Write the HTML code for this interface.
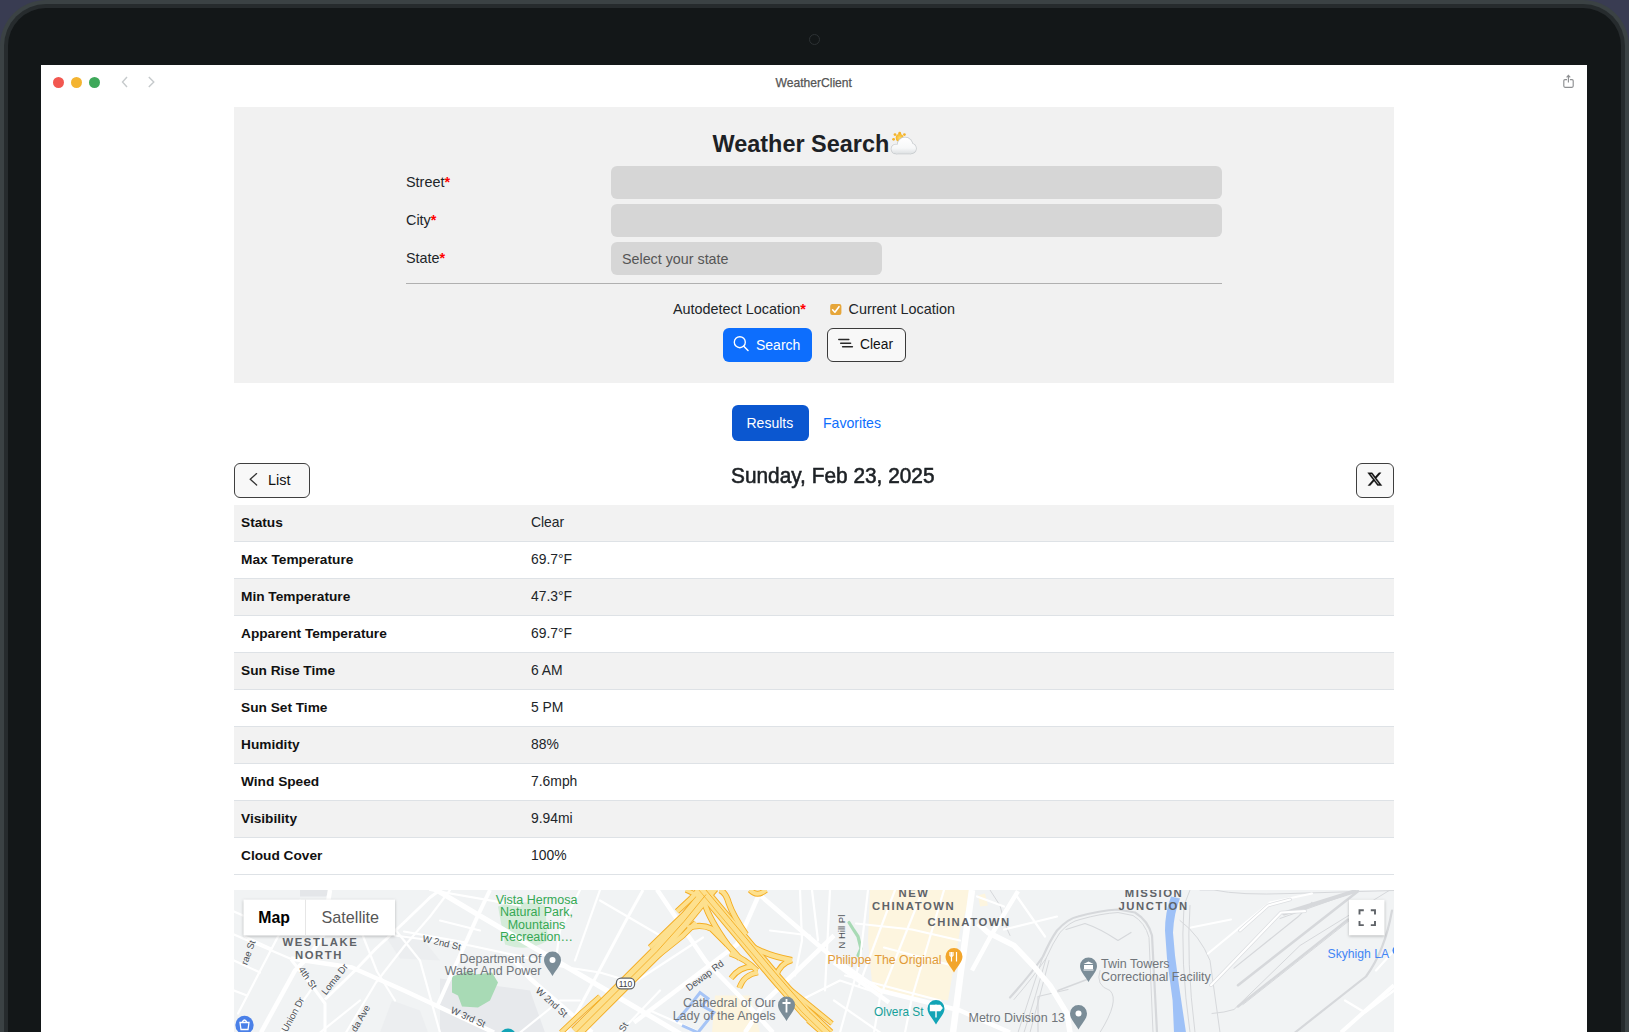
<!DOCTYPE html>
<html><head><meta charset="utf-8">
<style>
*{box-sizing:border-box;margin:0;padding:0}
html,body{width:1629px;height:1032px;overflow:hidden;background:#393c52;font-family:"Liberation Sans",sans-serif;color:#212529}
.abs{position:absolute}
.t{position:absolute;white-space:nowrap;line-height:normal}
#rim{position:absolute;left:0;top:0;width:1629px;height:1300px;border-radius:46px;background:#3b4244}
#ring{position:absolute;left:4px;top:4px;width:1621px;height:1292px;border-radius:42px;background:#262b2d}
#bezel{position:absolute;left:8px;top:8px;width:1613px;height:1284px;border-radius:38px;background:#131718}
#screen{position:absolute;left:41px;top:65px;width:1546px;height:1000px;background:#fff;overflow:hidden}
.dot{position:absolute;width:11.2px;height:11.2px;border-radius:50%;top:76.8px}
.req{color:#f00;font-weight:bold}
.lbl{font-size:14.4px;color:#212529}
.inp{position:absolute;background:#d6d6d6;border-radius:6px}
.btn{position:absolute;border-radius:6px}
.row{position:absolute;left:234px;width:1160px;height:37px;border-bottom:1px solid #dee2e6}
.row.s{background:#f2f2f2}
.k{position:absolute;left:7px;top:10.4px;font-weight:bold;font-size:13.7px;color:#111}
.v{position:absolute;left:297px;top:9.6px;font-size:13.9px;color:#212529}
</style></head><body>
<div id="rim"></div><div id="ring"></div><div id="bezel"></div>
<div class="abs" style="left:809px;top:34px;width:11px;height:11px;border-radius:50%;border:1.8px solid #2d3234"></div>
<div id="screen"></div>

<!-- toolbar -->
<div class="dot" style="left:52.5px;background:#f25750"></div>
<div class="dot" style="left:70.5px;background:#f4b431"></div>
<div class="dot" style="left:88.6px;background:#3ea85a"></div>
<svg class="abs" style="left:118px;top:74px" width="40" height="16" viewBox="0 0 40 16">
 <path d="M9 3 L4.5 8 L9 13" fill="none" stroke="#c6cacc" stroke-width="1.4"/>
 <path d="M30.8 3 L35.8 8 L30.8 13" fill="none" stroke="#c6cacc" stroke-width="1.4"/>
</svg>
<div class="t" style="left:775.5px;top:76.2px;font-size:12.1px;color:#555;-webkit-text-stroke:0.25px #555">WeatherClient</div>
<svg class="abs" style="left:1560px;top:73px" width="16" height="18" viewBox="0 0 16 18">
 <path d="M7 6.6 H5 Q3.8 6.6 3.8 7.8 V13.1 Q3.8 14.3 5 14.3 H12 Q13.2 14.3 13.2 13.1 V7.8 Q13.2 6.6 12 6.6 H9.9" fill="none" stroke="#8e9092" stroke-width="1.15"/>
 <path d="M8.4 9.6 V2.6 M6.6 4.3 L8.4 2.4 L10.2 4.3" fill="none" stroke="#8e9092" stroke-width="1.15"/>
</svg>

<!-- search panel -->
<div class="abs" style="left:234px;top:107px;width:1160px;height:276px;background:#f1f1f1"></div>
<div class="t" style="left:712.5px;top:131px;font-size:23.45px;font-weight:bold;color:#1d2125">Weather Search</div>

<div class="t lbl" style="left:406px;top:174.2px">Street<span class="req">*</span></div>
<div class="t lbl" style="left:406px;top:212.2px">City<span class="req">*</span></div>
<div class="t lbl" style="left:406px;top:250.2px">State<span class="req">*</span></div>
<div class="inp" style="left:610.5px;top:166px;width:611px;height:33px"></div>
<div class="inp" style="left:610.5px;top:204px;width:611px;height:33px"></div>
<div class="inp" style="left:610.5px;top:242px;width:271px;height:33px"></div>
<div class="t" style="left:622px;top:251px;font-size:14.3px;color:#555">Select your state</div>
<div class="abs" style="left:406px;top:283px;width:816px;height:1px;background:#b0b0b0"></div>

<div class="t lbl" style="left:673px;top:300.5px">Autodetect Location<span class="req">*</span></div>
<div class="t lbl" style="left:848.5px;top:300.5px">Current Location</div>

<div class="btn" style="left:723px;top:327.5px;width:89px;height:34px;background:#0d6efd"></div>
<div class="t" style="left:756px;top:336.5px;font-size:14px;color:#fff">Search</div>
<div class="btn" style="left:826.5px;top:327.5px;width:79px;height:34px;background:#f8f8f8;border:1.5px solid #3a3a3a"></div>
<div class="t" style="left:860px;top:336.5px;font-size:13.8px;color:#111">Clear</div>

<!-- tabs -->
<div class="btn" style="left:732px;top:405px;width:76.5px;height:36px;background:#0b57d0"></div>
<div class="t" style="left:746.5px;top:414.6px;font-size:14px;color:#fff">Results</div>
<div class="t" style="left:823px;top:414.6px;font-size:14.1px;color:#0d6efd">Favorites</div>

<div class="t" style="left:730.5px;top:462.6px;font-size:22.5px;color:#1d2125;transform:scaleX(0.926);transform-origin:0 0;-webkit-text-stroke:0.6px #1d2125">Sunday, Feb 23, 2025</div>
<div class="btn" style="left:234px;top:463px;width:76px;height:34.5px;background:#f8f8f8;border:1.5px solid #3f3f3f"></div>
<div class="t" style="left:268px;top:471.5px;font-size:14.5px;color:#111">List</div>
<div class="btn" style="left:1356px;top:463px;width:38px;height:34.5px;background:#f8f8f8;border:1.5px solid #3f3f3f"></div>


<!-- icons -->
<svg class="abs" style="left:888px;top:128px" width="32" height="30" viewBox="888 128 32 30">
 <defs><linearGradient id="cg" gradientUnits="userSpaceOnUse" x1="0" y1="137" x2="0" y2="154"><stop offset="0" stop-color="#ffffff"/><stop offset="0.65" stop-color="#f7f8f9"/><stop offset="1" stop-color="#dcdfe1"/></linearGradient>
 <radialGradient id="sg"><stop offset="0" stop-color="#ffd864"/><stop offset="1" stop-color="#f4b425"/></radialGradient></defs>
 <g fill="#f4b22a"><circle cx="895" cy="134.6" r="1.4"/><circle cx="899.7" cy="133.2" r="1.4"/><circle cx="904.4" cy="134.6" r="1.4"/><circle cx="893.6" cy="139.3" r="1.4"/></g>
 <circle cx="899.6" cy="137.8" r="3.9" fill="url(#sg)"/>
 <g fill="#c6cacd"><circle cx="905" cy="145" r="8.2"/><circle cx="911" cy="148.5" r="5.7"/><circle cx="896" cy="149" r="5.3"/><rect x="896" y="147" width="15" height="7.3"/></g>
 <g fill="url(#cg)"><circle cx="905" cy="145" r="7.5"/><circle cx="911" cy="148.5" r="5"/><circle cx="896" cy="149" r="4.6"/><rect x="896" y="147" width="15" height="6.6"/></g>
</svg>
<svg class="abs" style="left:828px;top:302px" width="16" height="15" viewBox="0 0 16 15">
 <rect x="2.2" y="2" width="11.2" height="11" rx="2" fill="#e6a63a"/>
 <path d="M4.6 7.8 L6.9 10.2 L11 4.7" fill="none" stroke="#fff" stroke-width="1.6" stroke-linecap="round" stroke-linejoin="round"/>
</svg>
<svg class="abs" style="left:730px;top:333px" width="22" height="22" viewBox="0 0 22 22">
 <circle cx="9.8" cy="9.2" r="5.5" fill="none" stroke="#fff" stroke-width="1.35"/>
 <path d="M13.8 13.2 L18 17.5" stroke="#fff" stroke-width="1.5" stroke-linecap="round"/>
</svg>
<svg class="abs" style="left:834px;top:334px" width="22" height="18" viewBox="0 0 22 18">
 <path d="M4.8 5.5 H14.8 M6.7 9.3 H16.6 M8.6 12.8 H18.4" stroke="#2a2a2a" stroke-width="1.5" stroke-linecap="round"/>
</svg>
<svg class="abs" style="left:244px;top:470px" width="18" height="18" viewBox="0 0 18 18">
 <path d="M12.6 3.6 L6.2 9.3 L12.6 15" fill="none" stroke="#333" stroke-width="1.35" stroke-linecap="round" stroke-linejoin="round"/>
</svg>
<svg class="abs" style="left:1367px;top:471px" width="16" height="16" viewBox="1.2 1.2 22 22">
 <g transform="translate(1.1 1.6) scale(0.9 0.9)"><path d="M18.244 2.25h3.308l-7.227 8.26 8.502 11.24H16.17l-5.214-6.817L4.99 21.75H1.68l7.73-8.835L1.254 2.25H8.08l4.713 6.231zm-1.161 17.52h1.833L7.084 4.126H5.117z" fill="#111" stroke="#111" stroke-width="0.6"/></g>
</svg>

<!-- table -->
<div id="table">
<div class="row s" style="top:504.6px"><span class="k">Status</span><span class="v">Clear</span></div>
<div class="row" style="top:541.6px"><span class="k">Max Temperature</span><span class="v">69.7°F</span></div>
<div class="row s" style="top:578.6px"><span class="k">Min Temperature</span><span class="v">47.3°F</span></div>
<div class="row" style="top:615.6px"><span class="k">Apparent Temperature</span><span class="v">69.7°F</span></div>
<div class="row s" style="top:652.6px"><span class="k">Sun Rise Time</span><span class="v">6 AM</span></div>
<div class="row" style="top:689.6px"><span class="k">Sun Set Time</span><span class="v">5 PM</span></div>
<div class="row s" style="top:726.6px"><span class="k">Humidity</span><span class="v">88%</span></div>
<div class="row" style="top:763.6px"><span class="k">Wind Speed</span><span class="v">7.6mph</span></div>
<div class="row s" style="top:800.6px"><span class="k">Visibility</span><span class="v">9.94mi</span></div>
<div class="row" style="top:837.6px"><span class="k">Cloud Cover</span><span class="v">100%</span></div>
</div>

<!-- map -->
<svg class="abs" style="left:234px;top:889.5px" width="1160" height="142.5" viewBox="234 889.5 1160 142.5">
<rect x="234" y="889.5" width="1160" height="143" fill="#f1f3f4"/>
<path d="M440 978 L530 990 L545 1032 L440 1032 Z" fill="#e7e9ec"/>
<path d="M300 889.5 L330 889.5 L326 896 L300 896 Z" fill="#e4e6e9"/>
<path d="M392 1000 L420 1010 L428 1032 L380 1032 Z" fill="#eceef0"/>
<path d="M385 935 L420 935 L440 960 L400 958 Z" fill="#eceef0"/>
<path d="M870 889.5 L972 889.5 L960 930 L948 1000 L873 992 L868 940 Z" fill="#fdf5df"/>
<path d="M715 995 L750 995 L760 1032 L712 1032 Z" fill="#fdf5df"/>
<path d="M978 895 L985 893 L988 905 L980 906 Z" fill="#fdf5df"/>
<path d="M498 906 Q520 898 545 905 L548 940 Q528 952 505 944 Z" fill="#d4ecd9"/>
<path d="M849 922 L854 930 L858 936 L861 948 L858 955" fill="none" stroke="#a8dab5" stroke-width="3.2" stroke-linecap="round"/>
<path d="M452 976 L470 970 L475 974 L492 972 L498 982 L490 1000 L478 1007 L462 1006 L458 995 L452 992 Z" fill="#a8dab5"/>
<path d="M1010 997 Q1030 975 1043 956 Q1050 940 1057 930 Q1068 918 1078 916 Q1100 910 1118 909 L1135 912 Q1148 920 1152 935 L1157 1032" fill="none" stroke="#d6d8db" stroke-width="2.2" stroke-linecap="round" stroke-linejoin="round"/>
<path d="M1014 999 Q1033 977 1046 958 Q1053 942 1060 932 Q1070 921 1080 919 Q1101 913 1118 912 L1133 915 Q1145 922 1149 937 L1153 1032" fill="none" stroke="#d6d8db" stroke-width="1" stroke-linecap="round" stroke-linejoin="round"/>
<path d="M1018 1032 Q1030 995 1043 956" fill="none" stroke="#d6d8db" stroke-width="1" stroke-linecap="round" stroke-linejoin="round"/>
<path d="M1024 1032 Q1036 995 1046 958" fill="none" stroke="#d6d8db" stroke-width="1" stroke-linecap="round" stroke-linejoin="round"/>
<path d="M1030 1032 Q1040 995 1049 960" fill="none" stroke="#d6d8db" stroke-width="1" stroke-linecap="round" stroke-linejoin="round"/>
<path d="M1238 984.7 L1358 890.7" fill="none" stroke="#d6d8db" stroke-width="2.6" stroke-linecap="round" stroke-linejoin="round"/>
<path d="M1234 967.6 L1298 916.3 L1312 902" fill="none" stroke="#d6d8db" stroke-width="1.2" stroke-linecap="round" stroke-linejoin="round"/>
<path d="M1238 1006 L1348 919" fill="none" stroke="#d6d8db" stroke-width="2.4" stroke-linecap="round" stroke-linejoin="round"/>
<path d="M1243 1004 L1352 918" fill="none" stroke="#d6d8db" stroke-width="1" stroke-linecap="round" stroke-linejoin="round"/>
<path d="M1295 1032 L1366 976 Q1385 950 1392 910" fill="none" stroke="#d6d8db" stroke-width="2.2" stroke-linecap="round" stroke-linejoin="round"/>
<path d="M1212 1013 Q1225 1012 1234 1009 L1300 945 L1390 889.5" fill="none" stroke="#d6d8db" stroke-width="1" stroke-linecap="round" stroke-linejoin="round"/>
<path d="M1284 913 L1355 890.7" fill="none" stroke="#d6d8db" stroke-width="4" stroke-linecap="round" stroke-linejoin="round"/>
<path d="M1280 918 L1350 893" fill="none" stroke="#d6d8db" stroke-width="1" stroke-linecap="round" stroke-linejoin="round"/>
<path d="M1190 1032 Q1180 960 1184 905 L1190 889.5" fill="none" stroke="#d6d8db" stroke-width="1" stroke-linecap="round" stroke-linejoin="round"/>
<path d="M1195 1032 Q1186 960 1190 905" fill="none" stroke="#d6d8db" stroke-width="1" stroke-linecap="round" stroke-linejoin="round"/>
<path d="M1200 889.5 L1214 889.5 Q1240 895 1290 893 L1394 890" fill="none" stroke="#d6d8db" stroke-width="1" stroke-linecap="round" stroke-linejoin="round"/>
<path d="M1066 929 L1085 923 Q1100 928 1118 940 L1131 932" fill="none" stroke="#d6d8db" stroke-width="1.2" stroke-linecap="round" stroke-linejoin="round"/>
<path d="M1038 1032 L1038 996 L1068 989" fill="none" stroke="#d6d8db" stroke-width="1.2" stroke-linecap="round" stroke-linejoin="round"/>
<path d="M1058 990 L1087 979" fill="none" stroke="#d6d8db" stroke-width="1.5" stroke-linecap="round" stroke-linejoin="round"/>
<path d="M1100 1032 Q1120 1000 1110 990 Q1095 985 1100 970" fill="none" stroke="#d6d8db" stroke-width="1" stroke-linecap="round" stroke-linejoin="round"/>
<path d="M990 889.5 L1000 905 Q1005 925 1010 935" fill="none" stroke="#d6d8db" stroke-width="1" stroke-linecap="round" stroke-linejoin="round"/>
<path d="M1180 920 Q1200 935 1210 960 L1220 1032" fill="none" stroke="#d6d8db" stroke-width="1" stroke-linecap="round" stroke-linejoin="round"/>
<path d="M234 960 L260 972" fill="none" stroke="#ffffff" stroke-width="2.2" stroke-linecap="round" stroke-linejoin="round"/>
<path d="M234 990 L247 995" fill="none" stroke="#ffffff" stroke-width="2.2" stroke-linecap="round" stroke-linejoin="round"/>
<path d="M245 936 L271 948" fill="none" stroke="#ffffff" stroke-width="2.2" stroke-linecap="round" stroke-linejoin="round"/>
<path d="M234 911 L243 915" fill="none" stroke="#ffffff" stroke-width="2.2" stroke-linecap="round" stroke-linejoin="round"/>
<path d="M238 1013 L278 936 L300 900" fill="none" stroke="#ffffff" stroke-width="2.2" stroke-linecap="round" stroke-linejoin="round"/>
<path d="M234 934 L290 958" fill="none" stroke="#ffffff" stroke-width="2.2" stroke-linecap="round" stroke-linejoin="round"/>
<path d="M346 1032 L376 982 L404 946 L430 916 L450 889.5" fill="none" stroke="#ffffff" stroke-width="2.2" stroke-linecap="round" stroke-linejoin="round"/>
<path d="M281 1032 L314 985" fill="none" stroke="#ffffff" stroke-width="2.2" stroke-linecap="round" stroke-linejoin="round"/>
<path d="M362 933 L377 971 L395 1000" fill="none" stroke="#ffffff" stroke-width="2.2" stroke-linecap="round" stroke-linejoin="round"/>
<path d="M396 930 L420 960 L440 1032" fill="none" stroke="#ffffff" stroke-width="2.2" stroke-linecap="round" stroke-linejoin="round"/>
<path d="M395 935 L470 945 L540 960" fill="none" stroke="#ffffff" stroke-width="2.2" stroke-linecap="round" stroke-linejoin="round"/>
<path d="M404 931 L466 942" fill="none" stroke="#ffffff" stroke-width="2.2" stroke-linecap="round" stroke-linejoin="round"/>
<path d="M430 889.5 L520 905" fill="none" stroke="#ffffff" stroke-width="2.2" stroke-linecap="round" stroke-linejoin="round"/>
<path d="M440 920 L480 930" fill="none" stroke="#ffffff" stroke-width="2.2" stroke-linecap="round" stroke-linejoin="round"/>
<path d="M360 1000 L320 1032" fill="none" stroke="#ffffff" stroke-width="2.2" stroke-linecap="round" stroke-linejoin="round"/>
<path d="M580 889.5 L560 930 L555 965" fill="none" stroke="#ffffff" stroke-width="2.2" stroke-linecap="round" stroke-linejoin="round"/>
<path d="M600 889.5 L575 960" fill="none" stroke="#ffffff" stroke-width="2.2" stroke-linecap="round" stroke-linejoin="round"/>
<path d="M555 965 L600 972 L634 982" fill="none" stroke="#ffffff" stroke-width="2.2" stroke-linecap="round" stroke-linejoin="round"/>
<path d="M634 982 L703 937" fill="none" stroke="#ffffff" stroke-width="2.2" stroke-linecap="round" stroke-linejoin="round"/>
<path d="M600 900 L660 935" fill="none" stroke="#ffffff" stroke-width="2.2" stroke-linecap="round" stroke-linejoin="round"/>
<path d="M620 1032 L660 990" fill="none" stroke="#ffffff" stroke-width="2.2" stroke-linecap="round" stroke-linejoin="round"/>
<path d="M650 1010 L700 1032" fill="none" stroke="#ffffff" stroke-width="2.2" stroke-linecap="round" stroke-linejoin="round"/>
<path d="M520 1032 L560 1000 L580 1000" fill="none" stroke="#ffffff" stroke-width="2.2" stroke-linecap="round" stroke-linejoin="round"/>
<path d="M800 889.5 L802 940 L795 975" fill="none" stroke="#ffffff" stroke-width="2.2" stroke-linecap="round" stroke-linejoin="round"/>
<path d="M812 889.5 L818 940" fill="none" stroke="#ffffff" stroke-width="2.2" stroke-linecap="round" stroke-linejoin="round"/>
<path d="M770 930 L810 935" fill="none" stroke="#ffffff" stroke-width="2.2" stroke-linecap="round" stroke-linejoin="round"/>
<path d="M830 889.5 L825 990" fill="none" stroke="#ffffff" stroke-width="2.2" stroke-linecap="round" stroke-linejoin="round"/>
<path d="M800 1000 L840 980 L870 990" fill="none" stroke="#ffffff" stroke-width="2.2" stroke-linecap="round" stroke-linejoin="round"/>
<path d="M868 889.5 L860 960 L840 1032" fill="none" stroke="#ffffff" stroke-width="2.2" stroke-linecap="round" stroke-linejoin="round"/>
<path d="M895 889.5 L859 985" fill="none" stroke="#ffffff" stroke-width="2.2" stroke-linecap="round" stroke-linejoin="round"/>
<path d="M923 889.5 L880 997 L874 1032" fill="none" stroke="#ffffff" stroke-width="2.2" stroke-linecap="round" stroke-linejoin="round"/>
<path d="M944 889.5 L912 997 L905 1032" fill="none" stroke="#ffffff" stroke-width="2.2" stroke-linecap="round" stroke-linejoin="round"/>
<path d="M856 923 L912 929 L960 940" fill="none" stroke="#ffffff" stroke-width="2.2" stroke-linecap="round" stroke-linejoin="round"/>
<path d="M884 947 L956 966" fill="none" stroke="#ffffff" stroke-width="2.2" stroke-linecap="round" stroke-linejoin="round"/>
<path d="M845 975 L940 1000" fill="none" stroke="#ffffff" stroke-width="2.2" stroke-linecap="round" stroke-linejoin="round"/>
<path d="M834 1000 L880 1032" fill="none" stroke="#ffffff" stroke-width="2.2" stroke-linecap="round" stroke-linejoin="round"/>
<path d="M977 896 L1004 906" fill="none" stroke="#ffffff" stroke-width="2.2" stroke-linecap="round" stroke-linejoin="round"/>
<path d="M1017 896 L1045 936" fill="none" stroke="#ffffff" stroke-width="2.2" stroke-linecap="round" stroke-linejoin="round"/>
<path d="M1004 929 L1057 916" fill="none" stroke="#ffffff" stroke-width="2.2" stroke-linecap="round" stroke-linejoin="round"/>
<path d="M1191 927 L1231 919" fill="none" stroke="#ffffff" stroke-width="2.2" stroke-linecap="round" stroke-linejoin="round"/>
<path d="M1208 953 L1270 902 L1312 893" fill="none" stroke="#ffffff" stroke-width="2.2" stroke-linecap="round" stroke-linejoin="round"/>
<path d="M1376 970 L1394 950" fill="none" stroke="#ffffff" stroke-width="2.2" stroke-linecap="round" stroke-linejoin="round"/>
<path d="M1345 1000 L1365 1012 L1394 990" fill="none" stroke="#ffffff" stroke-width="2.2" stroke-linecap="round" stroke-linejoin="round"/>
<path d="M1211 984.7 L1281 912 L1305 910.6" fill="none" stroke="#dcdee1" stroke-width="3.6" stroke-linecap="round" stroke-linejoin="round"/>
<path d="M1211 984.7 L1281 912 L1305 910.6" fill="none" stroke="#ffffff" stroke-width="2.2" stroke-linecap="round" stroke-linejoin="round"/>
<path d="M1240 930 L1268 905 L1290 899" fill="none" stroke="#dcdee1" stroke-width="3.6" stroke-linecap="round" stroke-linejoin="round"/>
<path d="M1240 930 L1268 905 L1290 899" fill="none" stroke="#ffffff" stroke-width="2.2" stroke-linecap="round" stroke-linejoin="round"/>
<path d="M291 958 L352 967 L404 990 L434 1004 L494 1032" fill="none" stroke="#ffffff" stroke-width="4.5" stroke-linecap="butt" stroke-linejoin="round"/>
<path d="M261 1032 L295 970 L310 955 L323 935 L330 889.5" fill="none" stroke="#ffffff" stroke-width="4.5" stroke-linecap="butt" stroke-linejoin="round"/>
<path d="M291 959 L314 988 L325 1003 L325 1032" fill="none" stroke="#ffffff" stroke-width="3" stroke-linecap="butt" stroke-linejoin="round"/>
<path d="M325 999 L355 970 L376 948 L404 922 L430 897 L440 889.5" fill="none" stroke="#ffffff" stroke-width="3" stroke-linecap="butt" stroke-linejoin="round"/>
<path d="M434 888 L476 913 L600 986 L634 1006 L700 1045" fill="none" stroke="#ffffff" stroke-width="5" stroke-linecap="butt" stroke-linejoin="round"/>
<path d="M510 955 L530 978 L581 1022 L592 1032" fill="none" stroke="#ffffff" stroke-width="4.5" stroke-linecap="butt" stroke-linejoin="round"/>
<path d="M438 1004 L477 917 L490 889.5" fill="none" stroke="#ffffff" stroke-width="4" stroke-linecap="butt" stroke-linejoin="round"/>
<path d="M643 889.5 L626 920 L594 980 L566 1032" fill="none" stroke="#ffffff" stroke-width="3" stroke-linecap="butt" stroke-linejoin="round"/>
<path d="M657 889 L684 929 L706 961 L738 994 L773 1032" fill="none" stroke="#ffffff" stroke-width="4.5" stroke-linecap="butt" stroke-linejoin="round"/>
<path d="M634 1022 L737 944 L759 894 L762 889" fill="none" stroke="#ffffff" stroke-width="4.5" stroke-linecap="butt" stroke-linejoin="round"/>
<path d="M758 893 L834 958 L880 990 L960 1010 L1010 1032" fill="none" stroke="#ffffff" stroke-width="4.5" stroke-linecap="butt" stroke-linejoin="round"/>
<path d="M834 935 L766 1000 L745 1032" fill="none" stroke="#ffffff" stroke-width="4.5" stroke-linecap="butt" stroke-linejoin="round"/>
<path d="M972 889.5 L961 970 L953 1032" fill="none" stroke="#ffffff" stroke-width="6.5" stroke-linecap="butt" stroke-linejoin="round"/>
<path d="M834 962 L889 1002" fill="none" stroke="#ffffff" stroke-width="4.5" stroke-linecap="butt" stroke-linejoin="round"/>
<path d="M978 923 L988 932 L1014 945 L1033 965 L1050 985 L1067 1013 L1070 1032" fill="none" stroke="#ffffff" stroke-width="5.5" stroke-linecap="butt" stroke-linejoin="round"/>
<path d="M1018 890.7 L991 935 L972 970" fill="none" stroke="#ffffff" stroke-width="4.5" stroke-linecap="butt" stroke-linejoin="round"/>
<path d="M1341 1032 L1394 984.7" fill="none" stroke="#ffffff" stroke-width="4" stroke-linecap="butt" stroke-linejoin="round"/>
<path d="M1171 896 Q1165 912 1165 930 L1167 958 L1172.6 1000 L1174 1032 L1186 1032 L1179 985 L1175 955 L1173 932 Q1174 912 1180 898 Z" fill="#9ec1f7"/>
<!-- freeways -->
<g fill="none" stroke-linecap="butt" stroke-linejoin="round">
<path d="M561 1032 L582 1012 L600 996" stroke="#f4ad22" stroke-width="5.6"/><path d="M561 1032 L582 1012 L600 996" stroke="#fde08e" stroke-width="3.8"/><path d="M576 1032 L608 1000 L657 951 L684 921 L706 894 L713 886" stroke="#f4ad22" stroke-width="13.3"/><path d="M650 947 L684 914 L700 895" stroke="#f4ad22" stroke-width="6.0"/><path d="M648 963 L683 935 L696 922" stroke="#f4ad22" stroke-width="6.0"/><path d="M699 886 L774 975.5 L805 1011 L829 1034" stroke="#f4ad22" stroke-width="12.3"/><path d="M706 892 L727 917 L750 944" stroke="#f4ad22" stroke-width="7.8"/><path d="M687.5 927.5 Q701 923 711.6 928.2 L727.4 944 L740 958" stroke="#f4ad22" stroke-width="6.3"/><path d="M704.7 902.8 Q709 918 727.4 944" stroke="#f4ad22" stroke-width="6.3"/><path d="M677 911 L691 898 L699 889" stroke="#f4ad22" stroke-width="6.0"/><path d="M719.8 889.5 Q726 892 728.8 902.8 Q733 915 746 934" stroke="#f4ad22" stroke-width="6.3"/><path d="M686 889.5 L702 897" stroke="#f4ad22" stroke-width="5.3"/><path d="M745 942 Q765 955 792 959.6" stroke="#f4ad22" stroke-width="6.3"/><path d="M776 975.6 Q780 963 792 959.6" stroke="#f4ad22" stroke-width="5.8"/><path d="M730 953 Q745 958 757 970" stroke="#f4ad22" stroke-width="5.8"/><path d="M731 977.7 Q740 966 753 966" stroke="#f4ad22" stroke-width="5.8"/><path d="M739.3 987.4 Q744 974 758 972" stroke="#f4ad22" stroke-width="5.8"/><path d="M783 983 L832 1023" stroke="#f4ad22" stroke-width="5.3"/><path d="M808 1020 L822 1032" stroke="#f4ad22" stroke-width="5.3"/><path d="M750 889.5 Q757 897 766 889.5" stroke="#f4ad22" stroke-width="5.8"/>
<path d="M576 1032 L608 1000 L657 951 L684 921 L706 894 L713 886" stroke="#fde08e" stroke-width="11.5"/><path d="M650 947 L684 914 L700 895" stroke="#fde08e" stroke-width="4.2"/><path d="M648 963 L683 935 L696 922" stroke="#fde08e" stroke-width="4.2"/><path d="M699 886 L774 975.5 L805 1011 L829 1034" stroke="#fde08e" stroke-width="10.5"/><path d="M706 892 L727 917 L750 944" stroke="#fde08e" stroke-width="6"/><path d="M687.5 927.5 Q701 923 711.6 928.2 L727.4 944 L740 958" stroke="#fde08e" stroke-width="4.5"/><path d="M704.7 902.8 Q709 918 727.4 944" stroke="#fde08e" stroke-width="4.5"/><path d="M677 911 L691 898 L699 889" stroke="#fde08e" stroke-width="4.2"/><path d="M719.8 889.5 Q726 892 728.8 902.8 Q733 915 746 934" stroke="#fde08e" stroke-width="4.5"/><path d="M686 889.5 L702 897" stroke="#fde08e" stroke-width="3.5"/><path d="M745 942 Q765 955 792 959.6" stroke="#fde08e" stroke-width="4.5"/><path d="M776 975.6 Q780 963 792 959.6" stroke="#fde08e" stroke-width="4"/><path d="M730 953 Q745 958 757 970" stroke="#fde08e" stroke-width="4"/><path d="M731 977.7 Q740 966 753 966" stroke="#fde08e" stroke-width="4"/><path d="M739.3 987.4 Q744 974 758 972" stroke="#fde08e" stroke-width="4"/><path d="M783 983 L832 1023" stroke="#fde08e" stroke-width="3.5"/><path d="M808 1020 L822 1032" stroke="#fde08e" stroke-width="3.5"/><path d="M750 889.5 Q757 897 766 889.5" stroke="#fde08e" stroke-width="4"/>
<path d="M576 1032 L608 1000 L657 951 L684 921 L706 894" stroke="#f4ad22" stroke-width="0.9"/><path d="M703 886 L778 975.5 L809 1011 L833 1034" stroke="#f4ad22" stroke-width="0.9"/><path d="M696 886 L771 975.5 L801.5 1011 L825 1034" stroke="#f4ad22" stroke-width="0.7"/>
</g>
<!-- 110 shield -->
<rect x="616.4" y="977.6" width="18.2" height="10.8" rx="4.6" fill="#fff" stroke="#5f6368" stroke-width="1.2"/>
<text x="625.5" y="986.2" font-size="8.6" text-anchor="middle" fill="#3c4043" font-family="Liberation Sans">110</text>
<!-- cathedral blue outline -->
<path d="M676 1021 L690 1005 L700 992 L708 998 L702 1005 L714 1012 L698 1032 L682 1025" fill="none" stroke="#a6c4f6" stroke-width="3"/>
<!-- labels -->
<g font-family="Liberation Sans">
 <g fill="#5f6368" font-weight="bold" font-size="11.3" letter-spacing="1.55">
  <text x="282.5" y="945.8">WESTLAKE</text>
  <text x="295" y="958.5">NORTH</text>
  <text x="914" y="896.5" text-anchor="middle">NEW</text>
  <text x="872" y="909.3">CHINATOWN</text>
  <text x="927.5" y="925">CHINATOWN</text>
  <text x="1154" y="896.5" text-anchor="middle">MISSION</text>
  <text x="1118.5" y="909.3">JUNCTION</text>
 </g>
 <g fill="#34a853" font-size="12.5" text-anchor="middle">
  <text x="536.5" y="903">Vista Hermosa</text>
  <text x="536.5" y="915.5">Natural Park,</text>
  <text x="536.5" y="928">Mountains</text>
  <text x="536.5" y="940.5">Recreation…</text>
 </g>
 <g fill="#70757a" font-size="12.5">
  <text x="541.5" y="962" text-anchor="end">Department Of</text>
  <text x="541.5" y="974" text-anchor="end">Water And Power</text>
  <text x="775.5" y="1006.2" text-anchor="end">Cathedral of Our</text>
  <text x="775.5" y="1019.4" text-anchor="end">Lady of the Angels</text>
  <text x="1101" y="967.5">Twin Towers</text>
  <text x="1101" y="980.6">Correctional Facility</text>
  <text x="968.5" y="1021.5">Metro Division 13</text>
 </g>
 <text x="941.5" y="963.8" text-anchor="end" fill="#e19a37" font-size="12.3">Philippe The Original</text>
 <text x="874" y="1015.8" fill="#16a09a" font-size="11.9">Olvera St</text>
 <text x="1327.5" y="957.7" fill="#4285f4" font-size="12.2">Skyhigh LA</text>
 <g fill="#4b4f54" font-size="9.5">
  <text transform="translate(535 991) rotate(42)" x="0" y="0">W 2nd St</text>
  <text transform="translate(450 1012) rotate(24)">W 3rd St</text>
  <text transform="translate(422 941) rotate(13)">W 2nd St</text>
  <text transform="translate(298 969) rotate(55)">4th St</text>
  <text transform="translate(326 995) rotate(-52)">Loma Dr</text>
  <text transform="translate(287 1032) rotate(-62)">Union Dr</text>
  <text transform="translate(356 1032) rotate(-60)">da Ave</text>
  <text transform="translate(689 991) rotate(-37)">Dewap Rd</text>
  <text transform="translate(845 948) rotate(-90)">N Hill Pl</text>
  <text transform="translate(247 965) rotate(-70)">rae St</text>
  <text transform="translate(624 1032) rotate(-60)">St</text>
 </g>
</g>
<!-- pins -->
<g>
 <path d="M552.5 975.5 C548 968 544 964.5 544 959.5 A8.5 8.5 0 0 1 561 959.5 C561 964.5 557 968 552.5 975.5 Z" fill="#7b8d98"/>
 <circle cx="552.5" cy="959.5" r="3" fill="#fff"/>
 <path d="M786.5 1020.5 C782 1013 778 1009.5 778 1004.5 A8.5 8.5 0 0 1 795 1004.5 C795 1009.5 791 1013 786.5 1020.5 Z" fill="#7b8d98"/>
 <path d="M786.5 998.5 V1012 M782.5 1002.5 H790.5" stroke="#fff" stroke-width="1.8"/>
 <path d="M954 972 C949.5 964.5 945.5 961 945.5 956 A8.5 8.5 0 0 1 962.5 956 C962.5 961 958.5 964.5 954 972 Z" fill="#f2a52c"/>
 <path d="M951.5 951.5 V961 M956.5 951.5 V961 M950 951.5 V955 Q951.5 957 953 955 V951.5" stroke="#fff" stroke-width="1.2" fill="none"/>
 <path d="M936 1024 C931.5 1016.5 927.5 1013 927.5 1008 A8.5 8.5 0 0 1 944.5 1008 C944.5 1013 940.5 1016.5 936 1024 Z" fill="#12a4b6"/>
 <path d="M936 1004 V1017 M930.5 1005 H940 L942 1007.5 L940 1010 H930.5 Z" stroke="#fff" stroke-width="1.4" fill="#fff"/>
 <path d="M1088.5 981.5 C1084 974 1080 970.5 1080 965.5 A8.5 8.5 0 0 1 1097 965.5 C1097 970.5 1093 974 1088.5 981.5 Z" fill="#7b8d98"/>
 <path d="M1083.5 963.5 L1088.5 961 L1093.5 963.5 Z M1084 964.5 H1093 V968.5 H1084 Z M1083.5 969 H1093.5 V970 H1083.5 Z" fill="#fff"/>
 <path d="M1078.5 1029 C1074 1021.5 1070 1018 1070 1013 A8.5 8.5 0 0 1 1087 1013 C1087 1018 1083 1021.5 1078.5 1029 Z" fill="#7b8d98"/>
 <circle cx="1078.5" cy="1013" r="3" fill="#fff"/>
 <circle cx="244.5" cy="1024.5" r="9.2" fill="#4a80e8"/>
 <path d="M240 1022 H249 L248 1029 H241 Z M242 1022 Q244.5 1017 247 1022" fill="none" stroke="#fff" stroke-width="1.3"/>
 <circle cx="508" cy="1036" r="8" fill="#12a4b6"/>
 <circle cx="1397.5" cy="950" r="5" fill="#4285f4"/>
 <circle cx="1306" cy="1040" r="8" fill="#7b8d98"/>
</g>
<!-- controls -->
<g>
 <rect x="243.5" y="899" width="151.5" height="36" fill="#fff" style="filter:drop-shadow(0 1px 1.5px rgba(0,0,0,0.25))"/>
 <rect x="305" y="899" width="1" height="36" fill="#e6e6e6"/>
 <text x="258.3" y="922.7" font-family="Liberation Sans" font-weight="bold" font-size="15.8" fill="#000">Map</text>
 <text x="321.5" y="922.7" font-family="Liberation Sans" font-size="16.2" fill="#565656">Satellite</text>
 <rect x="1349" y="899.3" width="35.5" height="35.5" fill="#fff" style="filter:drop-shadow(0 1px 1.5px rgba(0,0,0,0.25))"/>
 <path d="M1359.5 914 V909.8 H1363.8 M1370.8 909.8 H1375 V914 M1375 920.5 V924.6 H1370.8 M1363.8 924.6 H1359.5 V920.5" fill="none" stroke="#5f6368" stroke-width="1.9"/>
</g>
</svg>


</body></html>
